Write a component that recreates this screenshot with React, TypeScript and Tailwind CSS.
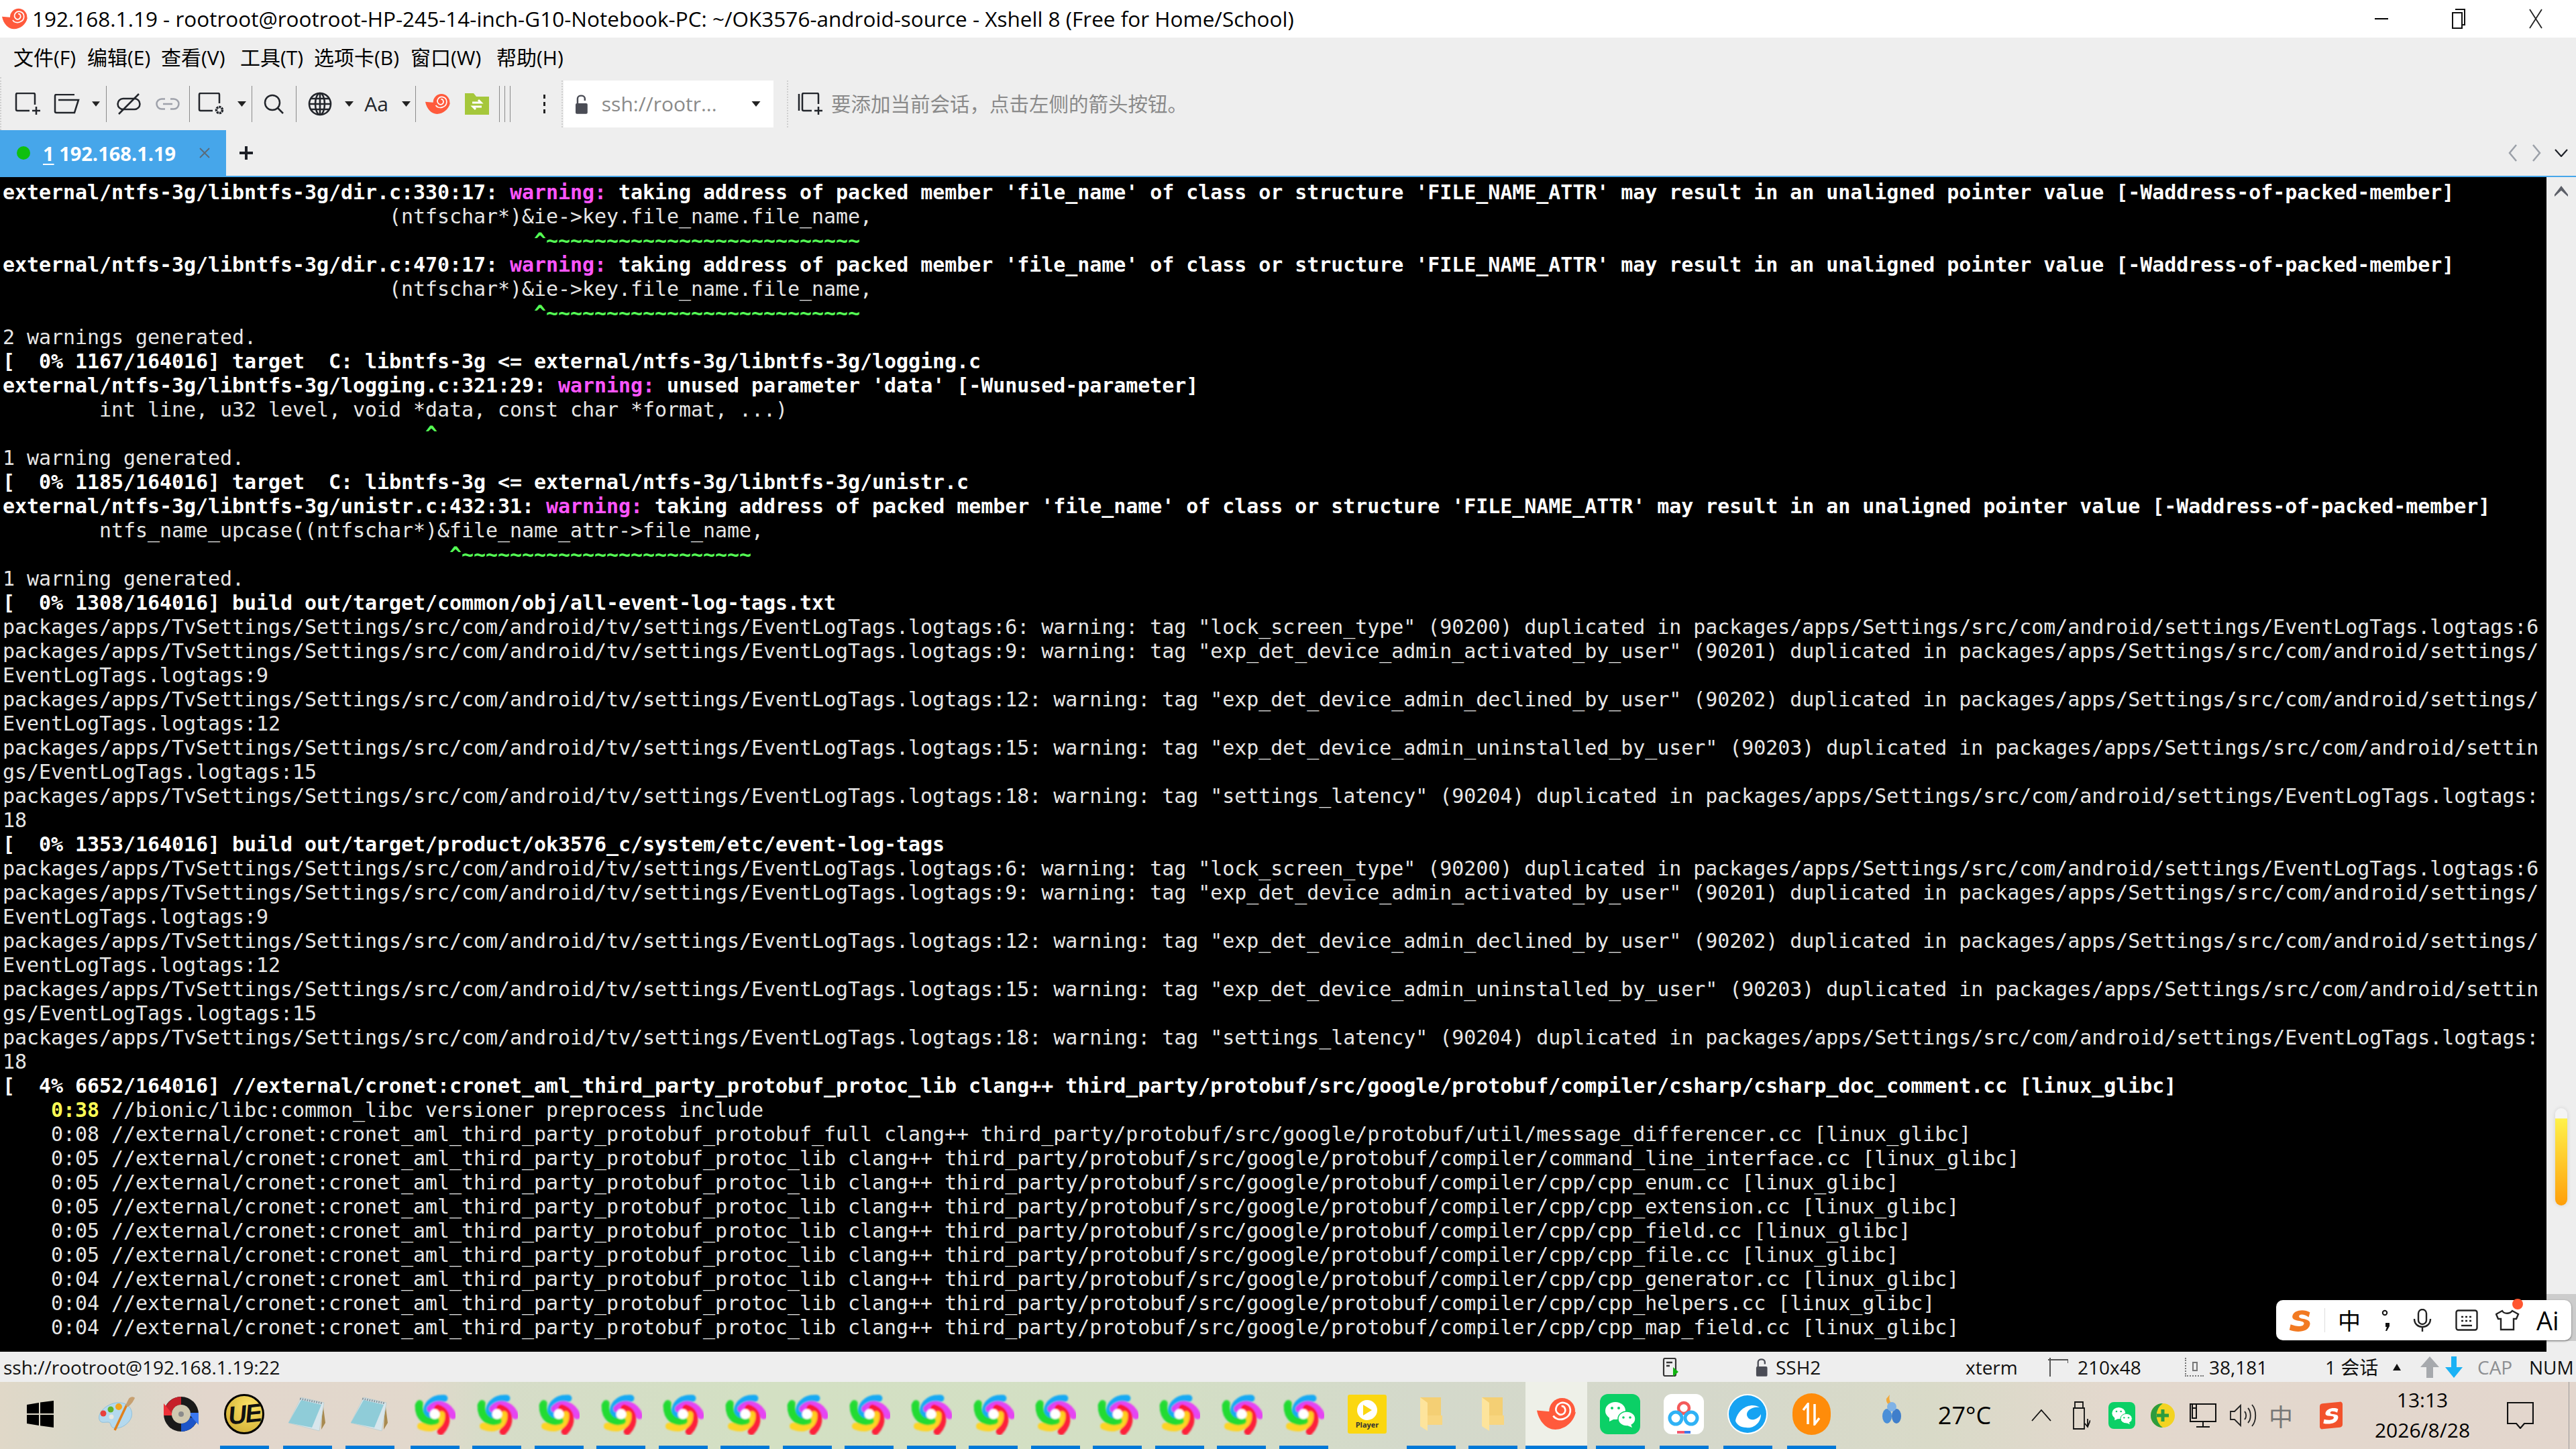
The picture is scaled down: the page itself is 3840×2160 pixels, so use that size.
import React from "react";

type Seg = [string, string];
const K: Record<string, string> = {
  n: "text-[#e6e6e6]",
  b: "font-bold text-white",
  m: "font-bold text-[#ff55ff]",
  g: "font-bold text-[#55ff55]",
  y: "font-bold text-[#ffff55]",
};
const warnMsg = "taking address of packed member 'file_name' of class or structure 'FILE_NAME_ATTR' may result in an unaligned pointer value [-Waddress-of-packed-member]";
const S = " ";
const pk = "packages/apps/TvSettings/Settings/src/com/android/tv/settings/EventLogTags.logtags:";
const dup = " duplicated in packages/apps/Settings/src/com/android/";
const tagRows: Seg[][] = [
  [[pk + '6: warning: tag "lock_screen_type" (90200)' + dup + "settings/EventLogTags.logtags:6", "n"]],
  [[pk + '9: warning: tag "exp_det_device_admin_activated_by_user" (90201)' + dup + "settings/", "n"]],
  [["EventLogTags.logtags:9", "n"]],
  [[pk + '12: warning: tag "exp_det_device_admin_declined_by_user" (90202)' + dup + "settings/", "n"]],
  [["EventLogTags.logtags:12", "n"]],
  [[pk + '15: warning: tag "exp_det_device_admin_uninstalled_by_user" (90203)' + dup + "settin", "n"]],
  [["gs/EventLogTags.logtags:15", "n"]],
  [[pk + '18: warning: tag "settings_latency" (90204)' + dup + "settings/EventLogTags.logtags:", "n"]],
  [["18", "n"]],
];
const proto = "//external/cronet:cronet_aml_third_party_protobuf_protoc_lib clang++ third_party/protobuf/src/google/protobuf/compiler/";
const rows: Seg[][] = [
  [["external/ntfs-3g/libntfs-3g/dir.c:330:17: ", "b"], ["warning: ", "m"], [warnMsg, "b"]],
  [[S.repeat(32) + "(ntfschar*)&ie->key.file_name.file_name,", "n"]],
  [[S.repeat(44) + "^" + "~".repeat(26), "g"]],
  [["external/ntfs-3g/libntfs-3g/dir.c:470:17: ", "b"], ["warning: ", "m"], [warnMsg, "b"]],
  [[S.repeat(32) + "(ntfschar*)&ie->key.file_name.file_name,", "n"]],
  [[S.repeat(44) + "^" + "~".repeat(26), "g"]],
  [["2 warnings generated.", "n"]],
  [["[  0% 1167/164016] target  C: libntfs-3g <= external/ntfs-3g/libntfs-3g/logging.c", "b"]],
  [["external/ntfs-3g/libntfs-3g/logging.c:321:29: ", "b"], ["warning: ", "m"], ["unused parameter 'data' [-Wunused-parameter]", "b"]],
  [["        int line, u32 level, void *data, const char *format, ...)", "n"]],
  [[S.repeat(35) + "^", "g"]],
  [["1 warning generated.", "n"]],
  [["[  0% 1185/164016] target  C: libntfs-3g <= external/ntfs-3g/libntfs-3g/unistr.c", "b"]],
  [["external/ntfs-3g/libntfs-3g/unistr.c:432:31: ", "b"], ["warning: ", "m"], [warnMsg, "b"]],
  [["        ntfs_name_upcase((ntfschar*)&file_name_attr->file_name,", "n"]],
  [[S.repeat(37) + "^" + "~".repeat(24), "g"]],
  [["1 warning generated.", "n"]],
  [["[  0% 1308/164016] build out/target/common/obj/all-event-log-tags.txt", "b"]],
  ...tagRows,
  [["[  0% 1353/164016] build out/target/product/ok3576_c/system/etc/event-log-tags", "b"]],
  ...tagRows,
  [["[  4% 6652/164016] " + proto + "csharp/csharp_doc_comment.cc [linux_glibc]", "b"]],
  [["    ", "n"], ["0:38", "y"], [" //bionic/libc:common_libc versioner preprocess include", "n"]],
  [["    0:08 //external/cronet:cronet_aml_third_party_protobuf_protobuf_full clang++ third_party/protobuf/src/google/protobuf/util/message_differencer.cc [linux_glibc]", "n"]],
  [["    0:05 " + proto + "command_line_interface.cc [linux_glibc]", "n"]],
  [["    0:05 " + proto + "cpp/cpp_enum.cc [linux_glibc]", "n"]],
  [["    0:05 " + proto + "cpp/cpp_extension.cc [linux_glibc]", "n"]],
  [["    0:05 " + proto + "cpp/cpp_field.cc [linux_glibc]", "n"]],
  [["    0:05 " + proto + "cpp/cpp_file.cc [linux_glibc]", "n"]],
  [["    0:04 " + proto + "cpp/cpp_generator.cc [linux_glibc]", "n"]],
  [["    0:04 " + proto + "cpp/cpp_helpers.cc [linux_glibc]", "n"]],
  [["    0:04 " + proto + "cpp/cpp_map_field.cc [linux_glibc]", "n"]],
];

function XshellLogo({ w, h }: { w: number; h: number }) {
  return (
    <svg width={w} height={h} viewBox="0 0 57 46">
      <path d="M0 18 L22 20 C26 31 40 34 57 20 C54 36 40 46 27 46 C14 46 3 34 0 18Z" fill="#ff5a3c" />
      <circle cx="37" cy="19" r="19" fill="#ff5a3c" />
      <path d="M24 26 C30 36 50 31 49 17 C48 6 34 3 29 12 C25 20 33 27 39 23 C44 19 41 11 36 12" fill="none" stroke="#fff" strokeWidth="2.6" />
    </svg>
  );
}

function Swirl() {
  const blades: [number, string, number][] = [
    [265, "#22d838", 0.95],
    [-2, "#12a8f6", 0.95],
    [62, "#e63cf4", 0.95],
    [128, "#ff1632", 0.95],
    [196, "#ffd41c", 0.95],
    [272, "#1fdc30", 0.9],
  ];
  return (
    <svg width="62" height="62" viewBox="-31 -31 62 62">
      <defs>
        <filter id="swb" x="-20%" y="-20%" width="140%" height="140%">
          <feGaussianBlur stdDeviation="1.1" />
        </filter>
      </defs>
      <g filter="url(#swb)" fill="none" strokeLinecap="round" strokeWidth="10.5">
        {blades.map(([r, c, o], i) => (
          <path key={i} transform={`rotate(${r})`} d="M-10 2 C-15 -12 -4 -25 15 -23" stroke={c} opacity={o} />
        ))}
        <circle cx="0" cy="0" r="7.5" fill="#fff" stroke="none" />
      </g>
    </svg>
  );
}

function Palette() {
  return (
    <svg width="56" height="56" viewBox="0 0 56 56">
      <path d="M3 36 C0 26 14 12 30 11 C45 10 54 20 51 32 C48 42 36 50 26 49 C18 48 22 40 16 40 C10 40 5 42 3 36Z" fill="#b4d9ee" stroke="#8fc0dc" />
      <circle cx="9" cy="27" r="4.5" fill="#e8403c" />
      <circle cx="20" cy="21" r="4.5" fill="#62b32c" />
      <circle cx="32" cy="17" r="5" fill="#f3a51d" />
      <circle cx="21" cy="32" r="3.5" fill="#e8e8e0" />
      <path d="M26 52 L44 14" stroke="#e0801c" strokeWidth="3.5" />
      <path d="M42 15 L47 5 C50 1 55 2 56 4 C54 8 52 12 46 17Z" fill="#c7a070" />
    </svg>
  );
}

function Tire() {
  return (
    <svg width="56" height="56" viewBox="0 0 56 56">
      <circle cx="28" cy="28" r="26" fill="#1a1a1a" />
      <path d="M28 2 A26 26 0 0 0 6 15 L2 20 L14 27 A14 14 0 0 1 28 14Z" fill="#c6202a" />
      <path d="M2 12 V30 H17 Z" fill="#ee3038" />
      <path d="M28 54 A26 26 0 0 0 50 41 L54 34 L38 33 L42 28 A14 14 0 0 1 28 42Z" fill="#1d55c8" />
      <path d="M38 26 H54 V44 Z" fill="#3a78f0" />
      <circle cx="28" cy="28" r="14" fill="#cfc8b0" />
      <circle cx="28" cy="28" r="4" fill="#8b8b8b" />
    </svg>
  );
}

function UE() {
  return (
    <div className="w-[60px] h-[60px] rounded-full border-[3px] border-black bg-[radial-gradient(circle_at_65%_30%,#ffe468,#c9a52a)] flex items-center justify-center overflow-hidden">
      <span className="text-[38px] tracking-[-2px] leading-none font-bold italic text-[#111] font-['Liberation_Sans'] -rotate-6">UE</span>
    </div>
  );
}

function Notepad() {
  return (
    <svg width="58" height="54" viewBox="0 0 58 54">
      <path d="M52 9 L56 40 L50 50 Z" fill="#a88a50" />
      <path d="M20 2 L54 10 L47 52 L1 40 Z" fill="#d8e6ec" stroke="#bcc" strokeWidth="0.8" />
      <path d="M20 6 L50 13 L36 47 L1 40Z" fill="#8fccd8" />
      <path d="M18 4 L52 11" stroke="#8a99a0" strokeWidth="3" strokeDasharray="2 1.5" />
    </svg>
  );
}

function Folder() {
  return (
    <svg width="34" height="52" viewBox="0 0 34 52">
      <path d="M1 1 H32 V42 H10 Z" fill="#f4cf74" />
      <path d="M26 28 H34 V42 H12 V28Z" fill="#f8d680" />
      <path d="M1 1 L12 9 V51 L1 44Z" fill="#fde49c" />
    </svg>
  );
}

function WeChatMark({ s }: { s: number }) {
  return (
    <svg width={s} height={s} viewBox="0 0 60 60">
      <rect width="60" height="60" rx="12" fill="#0bd066" />
      <ellipse cx="23" cy="25" rx="15" ry="13" fill="#fff" />
      <path d="M14 34 L14 41 L22 37Z" fill="#fff" />
      <ellipse cx="40" cy="37" rx="13" ry="11" fill="#fff" stroke="#0bd066" strokeWidth="1.5" />
      <path d="M46 45 L48 50 L41 47Z" fill="#fff" />
      <circle cx="18" cy="21" r="2" fill="#0bd066" />
      <circle cx="28" cy="21" r="2" fill="#0bd066" />
      <circle cx="35" cy="35" r="1.8" fill="#0bd066" />
      <circle cx="45" cy="35" r="1.8" fill="#0bd066" />
    </svg>
  );
}

function Baidu() {
  return (
    <svg width="60" height="60" viewBox="0 0 60 60">
      <rect width="60" height="60" rx="12" fill="#fff" />
      <circle cx="30" cy="21" r="8" fill="none" stroke="#f45a5a" strokeWidth="4.5" />
      <circle cx="18" cy="36" r="9" fill="none" stroke="#2fb2f5" strokeWidth="5" />
      <circle cx="41" cy="36" r="9" fill="none" stroke="#2fb2f5" strokeWidth="5" />
      <rect x="20" y="55" width="11" height="4" fill="#f4566c" />
      <rect x="31" y="55" width="9" height="4" fill="#3d78e8" />
    </svg>
  );
}

function SogouS({ s }: { s: number }) {
  return (
    <svg width={s} height={s} viewBox="0 0 40 40">
      <path d="M36 7 C26 1 9 3 7 13 C5 24 28 19 26 26 C25 31 14 31 4 27 L2 36 C14 41 34 40 36 27 C38 15 16 20 18 13 C19 9 27 10 34 15Z" fill="#f27a22" />
    </svg>
  );
}

function Caret({ c = "#222", w = 13 }: { c?: string; w?: number }) {
  return (
    <svg width={w} height="8" viewBox="0 0 13 8">
      <path d="M0 0 H13 L6.5 8Z" fill={c} />
    </svg>
  );
}

function Lock({ h = 30 }: { h?: number }) {
  return (
    <svg width={h * 0.66} height={h} viewBox="0 0 20 30">
      <path d="M4 15 V7 C4 1 15 1 15 7 V10" fill="none" stroke="#4a4c55" strokeWidth="2.5" />
      <rect x="1" y="14" width="18" height="16" rx="2" fill="#4a4c55" />
    </svg>
  );
}

function Sep() {
  return <div className="w-px h-[54px] bg-[#8a8a8a] shrink-0" />;
}

const ink = "#22252b";

function Toolbar() {
  const box = "flex items-center justify-center shrink-0";
  return (
    <div className="h-[79px] flex items-center pl-[21px] border-l-2 border-dotted border-[#cfcfcf] relative">
      <div className={`${box} w-[42px] -ml-[2px]`}>
        <svg width="40" height="34" viewBox="0 0 40 34" fill="none" stroke={ink} strokeWidth="2.5">
          <path d="M30 18 V3 Q30 1 28 1 H4 Q2 1 2 3 V25 Q2 27 4 27 H22" />
          <path d="M26 27 H38 M32 21 V33" />
        </svg>
      </div>
      <div className={`${box} w-[74px]`}>
        <svg width="40" height="30" viewBox="0 0 40 30" fill="none" stroke={ink} strokeWidth="2.5">
          <path d="M2 27 V3 Q2 1 4 1 H31 M7 9 H37 L31 28 H4 Q2 28 2 26" />
        </svg>
      </div>
      <div className={`${box} w-[12px]`}><Caret /></div>
      <div className="ml-[9px]"><Sep /></div>
      <div className={`${box} w-[66px]`}>
        <svg width="36" height="32" viewBox="0 0 36 32" fill="none" stroke={ink} strokeWidth="2.5">
          <rect x="1.5" y="8" width="33" height="16" rx="8" />
          <path d="M3 31 L33 1" />
        </svg>
      </div>
      <div className={`${box} w-[50px]`}>
        <svg width="36" height="18" viewBox="0 0 36 18" fill="none" stroke="#9ea1aa" strokeWidth="2.5">
          <path d="M14 1.5 H9 A7.5 7.5 0 0 0 9 16.5 H14 M22 1.5 H27 A7.5 7.5 0 0 1 27 16.5 H22 M11 9 H25" />
        </svg>
      </div>
      <div className="ml-[7px]"><Sep /></div>
      <div className={`${box} w-[64px]`}>
        <svg width="40" height="34" viewBox="0 0 40 34" fill="none" stroke={ink} strokeWidth="2.5">
          <path d="M32 16 V3 Q32 1 30 1 H4 Q2 1 2 3 V25 Q2 27 4 27 H22" />
          <circle cx="32" cy="26" r="4.5" strokeWidth="3.5" strokeDasharray="3 1" />
        </svg>
      </div>
      <div className={`${box} w-[26px]`}><Caret w={15} /></div>
      <div className="ml-[2px]"><Sep /></div>
      <div className={`${box} w-[64px]`}>
        <svg width="30" height="30" viewBox="0 0 30 30" fill="none" stroke={ink} strokeWidth="2.5">
          <circle cx="13" cy="13" r="11" />
          <path d="M21 21 L29 29" />
        </svg>
      </div>
      <div className="ml-[1px]"><Sep /></div>
      <div className={`${box} w-[70px]`}>
        <svg width="36" height="36" viewBox="0 0 36 36" fill="none" stroke={ink} strokeWidth="2.6">
          <circle cx="18" cy="18" r="16" />
          <ellipse cx="18" cy="18" rx="7" ry="16" />
          <path d="M18 2 V34 M2 18 H34 M4 10 H32 M4 26 H32" />
        </svg>
      </div>
      <div className={`${box} w-[16px]`}><Caret /></div>
      <div className={`${box} w-[66px] text-[30px] leading-none text-[#22252b] font-['Open_Sans',sans-serif]`}>Aa</div>
      <div className={`${box} w-[22px]`}><Caret /></div>
      <div className="ml-[3px]"><Sep /></div>
      <div className={`${box} w-[64px]`}><XshellLogo w={37} h={30} /></div>
      <div className={`${box} w-[54px]`}>
        <svg width="36" height="32" viewBox="0 0 36 32">
          <path d="M0 0 H13 L17 5 H36 V32 H0Z" fill="#a5c73b" />
          <path d="M11 14 H24 L20 10 M25 20 H12 L16 24" stroke="#fff" strokeWidth="3" fill="none" />
        </svg>
      </div>
      <div className="ml-[6px]"><Sep /></div>
      <div className="ml-[7px]"><Sep /></div>
      <div className="ml-[7px]"><Sep /></div>
      <div className={`${box} w-[76px] pl-[24px] flex-col gap-[5px]`}>
        <i className="w-[3px] h-[6px] bg-[#222]" /><i className="w-[3px] h-[6px] bg-[#222]" /><i className="w-[3px] h-[6px] bg-[#222]" />
      </div>
      <div className="h-[70px] border-l-2 border-dotted border-[#cfcfcf] w-[3px] shrink-0" />
      <div className="w-[313px] h-[70px] bg-white flex items-center pl-[17px] shrink-0">
        <Lock />
        <span className="ml-[20px] text-[#8a8a8a] text-[30px] leading-none w-[220px]">ssh://rootr...</span>
        <Caret w={20} />
      </div>
      <div className="ml-[20px] h-[70px] border-l-2 border-dotted border-[#cfcfcf] w-[2px] shrink-0" />
      <div className={`${box} w-[64px]`}>
        <svg width="38" height="34" viewBox="0 0 38 34" fill="none" stroke={ink} strokeWidth="2.5">
          <path d="M3 2 V27 M32 17 V3 Q32 1 30 1 H10 Q8 1 8 3 V25 Q8 27 10 27 H22 M26 27 H38 M32 21 V33" />
        </svg>
      </div>
      <span className="text-[#8a8a8a] text-[29.5px] leading-none whitespace-pre">要添加当前会话，点击左侧的箭头按钮。</span>
    </div>
  );
}

function Tab() {
  return (
    <div className="h-[68px] flex items-center">
      <div className="w-[337px] h-full bg-[#46a6ea] flex items-center pl-[25px] shrink-0">
        <i className="w-[20px] h-[20px] rounded-full bg-[#0fc00f] shrink-0" />
        <span className="ml-[19px] text-white font-bold text-[29px] leading-none whitespace-pre"><span className="underline underline-offset-4">1</span> 192.168.1.19</span>
        <svg className="ml-[33px]" width="20" height="20" viewBox="0 0 20 20" stroke="#5a6a78" strokeWidth="1.8"><path d="M3 3 L17 17 M17 3 L3 17" /></svg>
      </div>
      <svg className="ml-[20px]" width="20" height="20" viewBox="0 0 20 20" stroke="#1d2027" strokeWidth="4"><path d="M10 0 V20 M0 10 H20" /></svg>
      <div className="flex-1" />
      <div className="flex items-center gap-[19px] pr-[12px]">
        <svg width="16" height="28" viewBox="0 0 16 28" fill="none" stroke="#9ba0a8" strokeWidth="2.5"><path d="M13 2 L3 14 L13 26" /></svg>
        <svg width="16" height="28" viewBox="0 0 16 28" fill="none" stroke="#9ba0a8" strokeWidth="2.5"><path d="M3 2 L13 14 L3 26" /></svg>
        <svg width="20" height="12" viewBox="0 0 20 12" fill="none" stroke="#1d2027" strokeWidth="2.2"><path d="M1 1 L10 11 L19 1" /></svg>
      </div>
    </div>
  );
}

function Terminal() {
  return (
    <div className="flex-1 flex min-h-0 border-t-2 border-[#46a6ea]">
      <div className="flex-1 bg-black pt-[5px] pl-[4px] overflow-hidden font-['DejaVu_Sans_Mono',monospace] text-[30px] tracking-[-0.06px]">
        {rows.map((r, i) => (
          <div key={i} className="h-[36px] leading-[36px] whitespace-pre">
            {r.map(([t, k], j) => (
              <span key={j} className={K[k]}>{t}</span>
            ))}
          </div>
        ))}
      </div>
      <div className="w-[44px] bg-[#eeeeee] flex flex-col items-center shrink-0">
        <svg className="mt-[13px]" width="20" height="16" viewBox="0 0 20 16" fill="#5c5f68"><path d="M10 0 L20 13 V16 L10 7 L0 16 V13Z" /></svg>
        <div className="mt-[1359px] w-[18px] h-[145px] rounded-[9px] bg-[linear-gradient(180deg,#f4f4f4_0%,#f4f4f4_10%,#fff14a_11%,#ff9f0a_100%)] shadow-[0_0_6px_rgba(0,0,0,0.12)]" />
        <div className="mt-[132px] w-full h-[70px] bg-[#cccccc]" />
      </div>
    </div>
  );
}

function StatusBar() {
  const t = "text-[28px] leading-none whitespace-pre shrink-0";
  return (
    <div className="h-[45px] bg-[#eeeeee] flex items-center text-[#111] shrink-0">
      <span className={`${t} pl-[5px] w-[2477px]`}>ssh://rootroot@192.168.1.19:22</span>
      <div className="w-[140px] shrink-0">
        <svg width="26" height="28" viewBox="0 0 26 28" fill="none">
          <path d="M3 3 Q3 1 5 1 H19 Q21 1 21 3 V25 Q21 27 19 27 H5 Q3 27 3 25Z" stroke="#333" strokeWidth="2.2" />
          <path d="M7 7 H16 M7 12 H12" stroke="#333" strokeWidth="2.4" />
          <path d="M17 14 L25 21 L17 28Z" fill="#0fb30f" />
        </svg>
      </div>
      <div className="w-[30px] shrink-0"><Lock h={28} /></div>
      <span className={`${t} w-[283px]`}>SSH2</span>
      <span className={`${t} w-[123px]`}>xterm</span>
      <div className="w-[44px] shrink-0">
        <svg width="30" height="28" viewBox="0 0 30 28" fill="none" stroke="#555" strokeWidth="2"><path d="M3 0 V28 M0 3 H30 M30 3 V8" /></svg>
      </div>
      <span className={`${t} w-[160px]`}>210x48</span>
      <div className="w-[36px] shrink-0 flex">
        <div className="w-[28px] h-[28px] border-l-2 border-b-2 border-dotted border-[#777] flex items-center justify-center"><i className="w-[8px] h-[14px] border-2 border-[#777]" /></div>
      </div>
      <span className={`${t} w-[173px]`}>38,181</span>
      <span className={`${t} w-[101px] font-['Open_Sans','Noto_Sans_CJK_SC',sans-serif]`}>1 会话</span>
      <svg className="shrink-0" width="12" height="10" viewBox="0 0 12 10"><path d="M6 0 L12 10 H0Z" fill="#111" /></svg>
      <div className="ml-[29px] w-[37px] shrink-0">
        <svg width="28" height="32" viewBox="0 0 28 32"><path d="M14 0 L28 16 H19 V32 H9 V16 H0Z" fill="#a6a9ad" /></svg>
      </div>
      <div className="w-[48px] shrink-0">
        <svg width="26" height="32" viewBox="0 0 26 32"><path d="M9 0 H17 V16 H26 L13 32 L0 16 H9Z" fill="#1bb2f5" /></svg>
      </div>
      <span className={`${t} w-[77px] text-[#8d8f92]`}>CAP</span>
      <span className={t}>NUM</span>
    </div>
  );
}

function Item({ w, ml, u, bg, children }: { w: string; ml?: string; u?: boolean; bg?: string; children?: React.ReactNode }) {
  return (
    <div className={`${w} ${ml ?? ""} ${bg ?? ""} h-full flex flex-col items-center shrink-0`}>
      <div className="flex-1 flex items-center justify-center">{children}</div>
      <div className={`h-[5px] ${u ? (bg ? "w-full bg-[#0078d7]" : "w-[73px] bg-[#0078d7]") : ""}`} />
    </div>
  );
}

function Taskbar() {
  const tray = "h-full flex items-center justify-center shrink-0";
  return (
    <div className="h-[100px] flex shrink-0 text-black font-['Open_Sans',sans-serif] bg-[linear-gradient(90deg,#e0d8c8_0%,#d9d8c9_3.4%,#e2d6cc_8%,#e2d8cc_16%,#d6dcc8_19%,#d3e0c3_30%,#d3dfc4_44%,#d4d9cb_55%,#d5d8cb_66%,#d9dac8_75%,#e3d8cd_82%,#e3d6cd_100%)]">
      <Item w="w-[120px]">
        <svg width="40" height="40" viewBox="0 0 40 40" fill="#000">
          <path d="M0 6 L18 3 V19 H0Z M20 2.6 L40 0 V19 H20Z M0 21 H18 V37 L0 34Z M20 21 H40 V40 L20 37.3Z" />
        </svg>
      </Item>
      <Item w="w-[106px]"><Palette /></Item>
      <Item w="w-[88px]"><Tire /></Item>
      <Item w="w-[92px]" ml="ml-[4px]" u><UE /></Item>
      <Item w="w-[92px]" ml="ml-[2px]" u><Notepad /></Item>
      <Item w="w-[92px]" ml="ml-[1px]" u><Notepad /></Item>
      <div className="w-[4.75px] shrink-0" />
      {Array.from({ length: 15 }).map((_, i) => (
        <Item key={i} w="w-[92.5px]" u><Swirl /></Item>
      ))}
      <Item w="w-[92px]" ml="ml-[2.75px]">
        <div className="w-[58px] h-[58px] rounded-[3px] bg-[#fbd710] flex flex-col items-center pt-[8px]">
          <div className="w-[30px] h-[30px] rounded-full bg-white flex items-center justify-center">
            <svg width="14" height="16" viewBox="0 0 14 16"><path d="M1 0 L14 8 L1 16Z" fill="#fbd710" /></svg>
          </div>
          <span className="text-[11px] leading-[14px] font-bold text-[#333]">Player</span>
        </div>
      </Item>
      <Item w="w-[98px]" u><Folder /></Item>
      <Item w="w-[86px]" u><Folder /></Item>
      <Item w="w-[92px]" ml="ml-[6px]" u bg="bg-[#eef0e8]"><XshellLogo w={58} h={47} /></Item>
      <Item w="w-[98px]" u><WeChatMark s={60} /></Item>
      <Item w="w-[92px]" u><Baidu /></Item>
      <Item w="w-[98px]" u>
        <svg width="60" height="60" viewBox="0 0 60 60">
          <circle cx="30" cy="30" r="30" fill="#fff" />
          <circle cx="30" cy="30" r="28" fill="#16a3f2" />
          <path d="M12 40 C16 20 36 12 48 20 C36 18 26 26 30 34 C34 42 46 38 50 30 C50 44 38 52 28 50 C20 50 14 46 12 40Z" fill="#fff" />
        </svg>
      </Item>
      <Item w="w-[92px]" u>
        <div className="w-[57px] h-[62px] rounded-full bg-[#ff8c0a] flex items-center justify-center">
          <svg width="28" height="34" viewBox="0 0 28 34" fill="none" stroke="#fff" strokeWidth="3.5"><path d="M9 32 V2 L2 11 M19 2 V32 L26 23" /></svg>
        </div>
      </Item>
      <div className={`${tray} w-[40px] ml-[54px]`}>
        <svg width="32" height="44" viewBox="0 0 32 44" className="-mt-[18px]">
          <path d="M13 0 C11 8 14 14 20 14 C14 18 7 14 8 6Z" fill="#f2a93b" />
          <ellipse cx="9" cy="32" rx="7" ry="11" fill="#4a8fd8" />
          <ellipse cx="23" cy="32" rx="7" ry="11" fill="#3f7ecb" />
          <circle cx="16" cy="18" r="7" fill="#7fb2e6" />
        </svg>
      </div>
      <div className={`${tray} w-[85px] ml-[46px] text-[36px] leading-none`}>27°C</div>
      <div className={`${tray} w-[60px] ml-[42px]`}>
        <svg width="30" height="18" viewBox="0 0 30 18" fill="none" stroke="#111" strokeWidth="1.8"><path d="M1 17 L15 1 L29 17" /></svg>
      </div>
      <div className={`${tray} w-[60px]`}>
        <svg width="26" height="42" viewBox="0 0 26 42" fill="none" stroke="#111" strokeWidth="1.8"><path d="M3 1 H15 V10 H3Z M1 10 H17 V41 H1Z M22 26 V37 M18 33 L22 38 L26 28" /></svg>
      </div>
      <div className={`${tray} w-[60px]`}><WeChatMark s={40} /></div>
      <div className={`${tray} w-[61px]`}>
        <svg width="36" height="38" viewBox="0 0 36 38">
          <circle cx="18" cy="19" r="18" fill="#f3d321" />
          <path d="M18 1 A18 18 0 0 0 18 37 A22 22 0 0 1 18 1Z" fill="#2c9c3e" />
          <path d="M18 10 V28 M9 19 H27" stroke="#2c9c3e" strokeWidth="5" />
        </svg>
      </div>
      <div className={`${tray} w-[60px]`}>
        <svg width="40" height="36" viewBox="0 0 40 36" fill="none" stroke="#111" strokeWidth="2"><path d="M1 1 H39 V27 H1Z M20 27 V34 M10 35 H30" /><path d="M4 1 V22 H10 V1 M5 7 H9" /></svg>
      </div>
      <div className={`${tray} w-[60px]`}>
        <svg width="40" height="36" viewBox="0 0 40 36" fill="none" stroke="#222" strokeWidth="1.8"><path d="M1 12 H7 L16 3 V33 L7 24 H1Z M22 12 C25 15 25 21 22 24 M27 7 C32 12 32 24 27 29 M33 2 C40 10 40 26 33 34" /></svg>
      </div>
      <div className={`${tray} w-[52px] text-[36px] leading-none text-[#777] font-['Noto_Sans_CJK_SC',sans-serif]`}>中</div>
      <div className={`${tray} w-[98px]`}>
        <div className="w-[34px] h-[38px] rounded-[4px] bg-[#f2522c] -skew-y-6 flex items-center justify-center"><svg width="26" height="26" viewBox="0 0 40 40"><path d="M36 7 C26 1 9 3 7 13 C5 24 28 19 26 26 C25 31 14 31 4 27 L2 36 C14 41 34 40 36 27 C38 15 16 20 18 13 C19 9 27 10 34 15Z" fill="#fff" /></svg></div>
      </div>
      <div className={`${tray} w-[174px] flex-col text-[30px] leading-[45px] pb-[3px]`}>
        <span>13:13</span>
        <span>2026/8/28</span>
      </div>
      <div className={`${tray} w-[118px]`}>
        <svg width="40" height="40" viewBox="0 0 40 40" fill="none" stroke="#111" strokeWidth="2.2"><path d="M1 1 H39 V32 H26 L20 39 L14 32 H1Z" /></svg>
      </div>
      <div className="w-px h-full bg-[#999] ml-[13px]" />
    </div>
  );
}

function SogouBar() {
  const c = "absolute top-0 h-full flex items-center justify-center";
  return (
    <div className="absolute left-[3393px] top-[1938px] w-[440px] h-[60px] bg-white rounded-[10px] shadow-[0_1px_3px_rgba(0,0,0,0.5)]">
      <div className={`${c} left-[18px]`}><SogouS s={36} /></div>
      <div className="absolute left-[72px] top-[12px] w-px h-[36px] bg-[#ddd]" />
      <div className={`${c} left-[92px] text-[34px] text-black font-['Noto_Sans_CJK_SC',sans-serif] leading-none`}>中</div>
      <div className={`${c} left-[157px]`}>
        <svg width="14" height="32" viewBox="0 0 14 32">
          <circle cx="5" cy="5" r="3.2" fill="none" stroke="#111" strokeWidth="2" />
          <path d="M6 20 H12 V25 L8 32 H6 L8 26 H6Z" fill="#111" />
        </svg>
      </div>
      <div className={`${c} left-[204px]`}>
        <svg width="28" height="34" viewBox="0 0 28 34" fill="none" stroke="#222" strokeWidth="2.4"><rect x="8" y="1" width="12" height="22" rx="6" /><path d="M2 15 C2 31 26 31 26 15 M14 27 V34" /></svg>
      </div>
      <div className={`${c} left-[267px]`}>
        <svg width="34" height="32" viewBox="0 0 34 32" fill="none" stroke="#222" strokeWidth="2.4"><rect x="1.5" y="1.5" width="31" height="29" rx="3" /><path d="M9 11 H25 M9 17 H25" strokeDasharray="3 3" /><path d="M9 24 H25" /></svg>
      </div>
      <div className={`${c} left-[327px]`}>
        <svg width="36" height="32" viewBox="0 0 36 32" fill="none" stroke="#222" strokeWidth="2.4"><path d="M10 2 C13 7 21 7 25 2 L34 7 L31 14 H27 V30 H8 V14 H4 L1 7Z" /></svg>
      </div>
      <div className="absolute left-[352px] top-[-2px] w-[16px] h-[16px] rounded-full bg-[#ff5630]" />
      <div className={`${c} left-[388px] text-[38px] text-black leading-none font-['Open_Sans',sans-serif]`}>Ai</div>
    </div>
  );
}

export default function App() {
  return (
    <div className="relative w-[3840px] h-[2160px] overflow-hidden flex flex-col bg-[#eeeeee] text-black font-['Open_Sans','Noto_Sans_CJK_SC',sans-serif]">
      <div className="h-[56px] bg-white flex items-center shrink-0">
        <div className="ml-[3px] w-[45px]"><XshellLogo w={38} h={32} /></div>
        <span className="text-[31.5px] leading-none whitespace-pre flex-1">192.168.1.19 - rootroot@rootroot-HP-245-14-inch-G10-Notebook-PC: ~/OK3576-android-source - Xshell 8 (Free for Home/School)</span>
        <div className="flex items-center h-full">
          <div className="w-[115px] flex justify-center"><i className="w-[20px] h-[2px] bg-black" /></div>
          <div className="w-[115px] flex justify-center">
            <svg width="20" height="30" viewBox="0 0 20 30" fill="none" stroke="#111" strokeWidth="2"><path d="M5 1 H19 V24 H15" /><path d="M1 6 H15 V29 H1Z" /></svg>
          </div>
          <div className="w-[115px] flex justify-center mr-[-4px]">
            <svg width="20" height="30" viewBox="0 0 20 30" stroke="#222" strokeWidth="1.8"><path d="M1 1 L19 29 M19 1 L1 29" /></svg>
          </div>
          <div className="w-[7px]" />
        </div>
      </div>
      <div className="h-[59px] flex items-center gap-[16px] pl-[20px] text-[30px] leading-none shrink-0 whitespace-pre font-['Open_Sans','Noto_Sans_CJK_SC',sans-serif]">
        <span className="w-[94px]">文件(F)</span>
        <span className="w-[94px]">编辑(E)</span>
        <span className="w-[102px]">查看(V)</span>
        <span className="w-[94px]">工具(T)</span>
        <span className="w-[128px]">选项卡(B)</span>
        <span className="w-[112px]">窗口(W)</span>
        <span>帮助(H)</span>
      </div>
      <Toolbar />
      <Tab />
      <Terminal />
      <StatusBar />
      <Taskbar />
      <SogouBar />
    </div>
  );
}
